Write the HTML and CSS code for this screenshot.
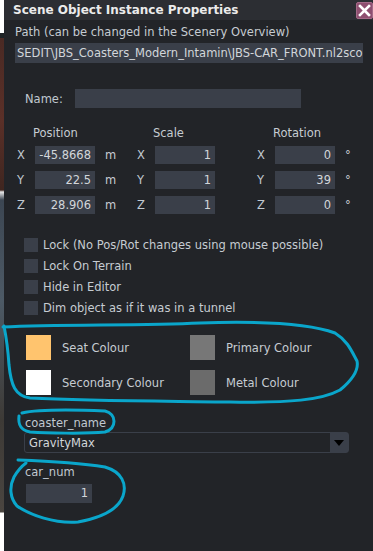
FILE: index.html
```html
<!DOCTYPE html>
<html lang="en">
<head>
    <meta charset="UTF-8">
    <meta name="viewport" content="width=device-width, initial-scale=1.0">
    <title>Scene Object Instance Properties</title>
    <link rel="stylesheet" href="styles.css">
</head>
<body>
    <!-- strip of the 3d view behind the dialog -->
    <div class="backdrop"></div>

    <div class="window">
        <div class="titlebar">
            <span class="title">Scene Object Instance Properties</span>
            <span class="close-btn">
                <svg width="13" height="13" viewBox="0 0 13 13"><path d="M2 2 L11 11 M11 2 L2 11" stroke="#fff" stroke-width="2.6" stroke-linecap="square"/></svg>
            </span>
        </div>

        <div class="content">
            <div class="path-label">Path (can be changed in the Scenery Overview)</div>
            <div class="path-field">SEDIT\JBS_Coasters_Modern_Intamin\JBS-CAR_FRONT.nl2sco</div>

            <div class="name-row">
                <span class="label name-label">Name:</span>
                <span class="field name-field"></span>
            </div>

            <div class="transform">
                <span></span><span class="head">Position</span><span></span>
                <span></span><span class="head">Scale</span><span></span>
                <span></span><span class="head">Rotation</span><span></span>

                <span class="axis">X</span><span class="field num">-45.8668</span><span class="unit">m</span>
                <span class="axis">X</span><span class="field num">1</span><span></span>
                <span class="axis">X</span><span class="field num">0</span><span class="unit">°</span>

                <span class="axis">Y</span><span class="field num">22.5</span><span class="unit">m</span>
                <span class="axis">Y</span><span class="field num">1</span><span></span>
                <span class="axis">Y</span><span class="field num">39</span><span class="unit">°</span>

                <span class="axis">Z</span><span class="field num">28.906</span><span class="unit">m</span>
                <span class="axis">Z</span><span class="field num">1</span><span></span>
                <span class="axis">Z</span><span class="field num">0</span><span class="unit">°</span>
            </div>

            <div class="checks">
                <div class="check"><span class="box"></span>Lock (No Pos/Rot changes using mouse possible)</div>
                <div class="check"><span class="box"></span>Lock On Terrain</div>
                <div class="check"><span class="box"></span>Hide in Editor</div>
                <div class="check"><span class="box"></span>Dim object as if it was in a tunnel</div>
            </div>

            <div class="colours">
                <div class="colour"><span class="swatch seat"></span>Seat Colour</div>
                <div class="colour"><span class="swatch primary"></span>Primary Colour</div>
                <div class="colour"><span class="swatch secondary"></span>Secondary Colour</div>
                <div class="colour"><span class="swatch metal"></span>Metal Colour</div>
            </div>

            <div class="label param-label">coaster_name</div>
            <div class="dropdown">
                <span class="dropdown-value">GravityMax</span>
                <span class="dropdown-arrow">
                    <svg width="10" height="6" viewBox="0 0 10 6"><path d="M0 0 H10 L5 6 Z" fill="#000"/></svg>
                </span>
            </div>

            <div class="label param-label car-label">car_num</div>
            <div class="field num car-field">1</div>
        </div>
    </div>

    <!-- hand drawn marker annotations on top of the screenshot -->
    <svg class="marks" width="373" height="551" viewBox="0 0 373 551">
        <path d="M3 327 C60 324 140 326 200 323 C260 321 310 324 335 333 C348 341 352 352 357 361 C359 370 352 380 340 390 C322 400 290 403 230 402 C160 401 90 401 30 398 C15 396 11 385 9 365 C8 350 6 336 4 326" />
        <path d="M22 413 C40 409 80 410 105 411 C117 414 117 428 105 432 C85 434 45 433 30 432 C20 430 18 424 19 416" />
        <path d="M18 460 C45 461 80 463 105 467 C122 472 127 484 123 496 C118 510 100 518 78 522 C55 524 30 515 17 506 C10 498 9 487 14 477 C18 470 22 466 26 463" />
    </svg>
</body>
</html>
```

FILE: styles.css
```css
body {
    margin: 0;
    width: 373px;
    height: 551px;
    display: flex;
    background-color: #222428;
    font-family: "DejaVu Sans", sans-serif;
    font-size: 11.5px;
    color: #c6ccd2;
    overflow: hidden;
}

.backdrop {
    width: 4px;
    flex-shrink: 0;
    background: linear-gradient(to bottom,
        #ffffff 0, #ffffff 33px,
        #1e2326 33px, #1e2326 38px,
        #4a2a24 38px, #5b3028 120px, #3f2620 190px,
        #e8e8e8 192px, #3c4652 200px, #4d5a66 300px, #3d3a36 420px, #4a4540 512px,
        #ffffff 513px, #ffffff 551px);
}

.window {
    flex: 1;
    display: flex;
    flex-direction: column;
    background-color: #222428;
}

.titlebar {
    height: 20px;
    display: flex;
    align-items: center;
    justify-content: space-between;
    padding-left: 9px;
    padding-right: 1px;
    background-color: #2c2e33;
}

.title {
    font-weight: bold;
    font-size: 12px;
    color: #ebebeb;
}

.close-btn {
    width: 15px;
    height: 15px;
    display: flex;
    align-items: center;
    justify-content: center;
    background-color: #8e4f70;
    border: 1px solid #a36a88;
    border-radius: 2px;
}

.content {
    padding: 0 11px;
    display: flex;
    flex-direction: column;
}

.path-label {
    margin-top: 6px;
    line-height: 12px;
}

.path-field {
    margin-top: 5px;
    height: 20px;
    line-height: 20px;
    padding-left: 2px;
    background-color: #3a3f49;
    color: #d2d6da;
    white-space: nowrap;
    overflow: hidden;
}

.field {
    background-color: #3a3f49;
    color: #d2d6da;
}

.num {
    text-align: right;
    padding-right: 4px;
    box-sizing: border-box;
}

.label {
    color: #c0c8d0;
}

.name-row {
    margin-top: 26px;
    display: flex;
    align-items: center;
}

.name-label {
    width: 50px;
    padding-left: 10px;
}

.name-field {
    width: 226px;
    height: 19px;
}

.transform {
    margin-top: 19px;
    display: grid;
    grid-template-columns: 20px 60px 40px 20px 60px 40px 20px 60px 14px;
    grid-template-rows: 12px 18px 18px 18px;
    row-gap: 7px;
    align-items: center;
}

.head {
    margin-left: -2px;
    line-height: 12px;
    white-space: nowrap;
}

.axis {
    padding-left: 2px;
    color: #c0c8d0;
}

.transform .field {
    height: 18px;
    line-height: 18px;
}

.unit {
    padding-left: 10px;
}

.checks {
    margin-top: 24px;
    display: flex;
    flex-direction: column;
    gap: 7px;
    padding-left: 9px;
}

.check {
    display: flex;
    align-items: center;
    height: 14px;
}

.box {
    width: 14px;
    height: 14px;
    margin-right: 5px;
    background-color: #3a3f49;
}

.colours {
    margin-top: 20px;
    padding-left: 11px;
    display: grid;
    grid-template-columns: 164px auto;
    row-gap: 10px;
}

.colour {
    display: flex;
    align-items: center;
}

.swatch {
    width: 25px;
    height: 25px;
    margin-right: 11px;
}

.seat { background-color: #ffc46e; }
.primary { background-color: #777777; }
.secondary { background-color: #ffffff; }
.metal { background-color: #6b6b6b; }

.param-label {
    margin-top: 22px;
    padding-left: 10px;
    line-height: 12px;
}

.dropdown {
    margin-top: 3px;
    margin-left: 9px;
    width: 325px;
    height: 21px;
    box-sizing: border-box;
    display: flex;
    align-items: center;
    justify-content: space-between;
    border: 1px solid #3a3f49;
    border-radius: 3px;
}

.dropdown-value {
    padding-left: 4px;
    color: #d2d6da;
}

.dropdown-arrow {
    width: 18px;
    height: 19px;
    display: flex;
    align-items: center;
    justify-content: center;
    background-color: #3a3f49;
}

.car-label {
    margin-top: 13px;
}

.car-field {
    margin-top: 6px;
    margin-left: 11px;
    width: 66px;
    height: 19px;
    line-height: 19px;
}

.marks {
    position: absolute;
    top: 0;
    left: 0;
    pointer-events: none;
    fill: none;
    stroke: #0aa6cb;
    stroke-width: 3;
    stroke-linecap: round;
    stroke-linejoin: round;
}
```
